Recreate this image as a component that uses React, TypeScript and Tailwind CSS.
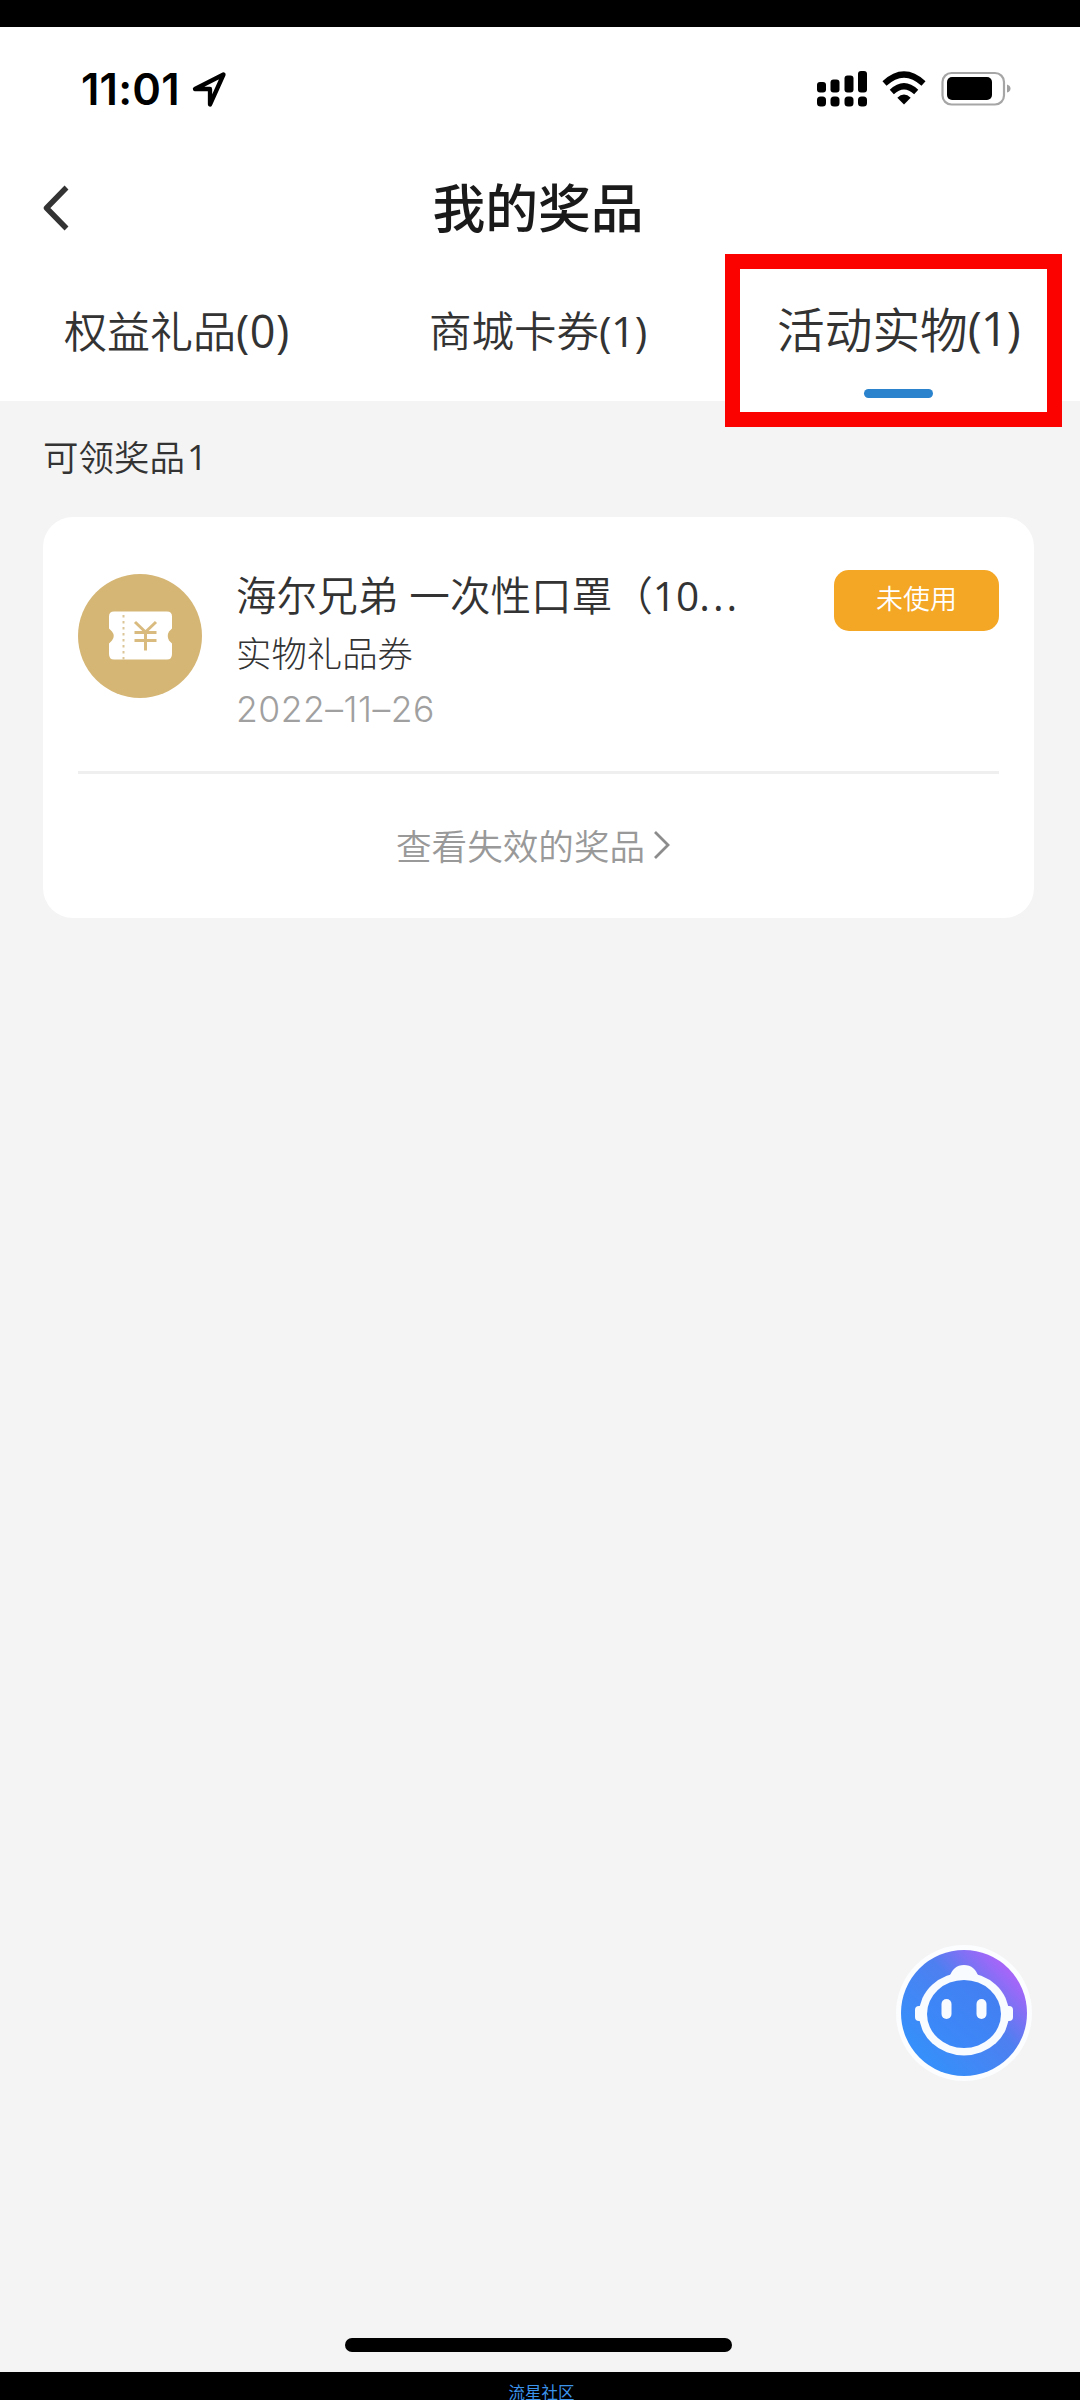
import React from "react";

const CJK = "font-['Noto_Sans_CJK_SC',sans-serif]";

function Num({ children, className = "" }: { children: React.ReactNode; className?: string }) {
  return <span className={`font-['Open_Sans',sans-serif] font-normal ${className}`}>{children}</span>;
}

function StatusBar() {
  return (
    <div className="flex h-[125px] items-start justify-between pl-[81px] pr-[69px] pt-[44px]">
      <div className="flex h-[36px] items-center text-black">
        <span className="w-[101px] whitespace-nowrap font-['Inter',sans-serif] text-[43.500px] font-semibold leading-[36px] tracking-[0.2px]">
          11:01
        </span>
        <svg className="ml-[9px] h-[38px] w-[38px]" viewBox="0 0 38 38" fill="none">
          <path d="M32.500 4.500 L4 19 H19 V34.500 Z" stroke="#000" strokeWidth="4.300" strokeLinejoin="round" />
        </svg>
      </div>
      <svg className="h-[36px] w-[194px]" viewBox="817 71 194 36">
        <g fill="#000">
          <rect x="817" y="82" width="9" height="10.500" rx="3" />
          <rect x="830.500" y="79.500" width="9" height="13" rx="3" />
          <rect x="844.500" y="75.500" width="9" height="17" rx="3" />
          <rect x="858" y="71" width="9" height="21.500" rx="3" />
          <rect x="817" y="96.500" width="9" height="10" rx="3.500" />
          <rect x="830.500" y="96.500" width="9" height="10" rx="3.500" />
          <rect x="844.500" y="96.500" width="9" height="10" rx="3.500" />
          <rect x="858" y="96.500" width="9" height="10" rx="3.500" />
          <path d="M904 104.500 L897.300 97.700 Q904 91.500 910.700 97.700 Z" />
          <rect x="947" y="77" width="45" height="23" rx="5" />
        </g>
        <path d="M884.500 83.500 Q904 65.500 923.500 83.500" fill="none" stroke="#000" strokeWidth="6" />
        <path d="M891.800 92 Q904 80.500 916.200 92" fill="none" stroke="#000" strokeWidth="6" />
        <rect x="942.500" y="73" width="61.500" height="31.500" rx="9" fill="none" stroke="#a6a6a6" strokeWidth="2.200" />
        <path d="M1007 84.500 Q1010.500 85.500 1010.500 88.500 Q1010.500 91.500 1007 92.500 Z" fill="#a0a0a0" />
      </svg>
    </div>
  );
}

function TitleBar() {
  return (
    <div className="grid h-[156px] grid-cols-[1fr_auto_1fr] items-start pl-[39px] pr-[43px]">
      <svg className="mt-[29px] h-[52px] w-[32px]" viewBox="0 0 32 52" fill="none">
        <path d="M27.500 6.500 L7.500 27 L27.500 47.500" stroke="#333" strokeWidth="5.500" strokeLinecap="butt" strokeLinejoin="round" />
      </svg>
      <h1 className="mt-[27px] text-[52.800px] font-medium leading-[52px] text-[#1a1a1a]">
        我的奖品
      </h1>
      <span />
    </div>
  );
}

function Tabs() {
  return (
    <div className="flex h-[93px] items-start font-[350] text-[#333]">
      <div className="w-[366px] whitespace-nowrap pl-[64px] text-[43px] leading-[42px]">
        权益礼品<Num className="text-[45px] tracking-[0.5px]">(0)</Num>
      </div>
      <div className="w-[359px] whitespace-nowrap pl-[63px] text-[42.500px] leading-[42px]">
        商城卡券<Num className="tracking-[-0.5px]">(1)</Num>
      </div>
      <div className="relative w-[337px] self-start">
        <div className="absolute left-0 top-[-54px] flex h-[173px] w-[337px] flex-col items-center border-[15.500px] border-[#fb0200] bg-white pt-[35px]">
          <div className="flex h-[48px] w-full items-center whitespace-nowrap pl-[37px] text-[47.700px]">
            活动实物<Num className="tracking-[-1.2px]">(1)</Num>
          </div>
          <div className="ml-[10px] mt-[37px] h-[9px] w-[69px] rounded-full bg-[#2b83cd]" />
        </div>
      </div>
    </div>
  );
}

function CouponIcon() {
  return (
    <svg className="mt-[57px] h-[125px] w-[125px] shrink-0" viewBox="0 0 125 125">
      <circle cx="62" cy="62" r="62" fill="#d5b675" />
      <path
        d="M36 37.500 H89 Q94 37.500 94 42.500 V54.500 L91 57.500 Q88.500 62 91 66.500 L94 69.500 V80 Q94 85.500 89 85.500 H36 Q31 85.500 31 80 V69.500 L34 66.500 Q37.500 62 34 57.500 L31 54.500 V42.500 Q31 37.500 36 37.500 Z"
        fill="#fff"
      />
      <path d="M45.500 41 V86" stroke="#dcc698" strokeWidth="2" strokeDasharray="2.500 3.500" />
      <path d="M57 48 L67.500 58 L78 48 M67.500 58 V76.500 M56.500 58.500 H78.500 M56.500 66.500 H78.500" fill="none" stroke="#d9bb80" strokeWidth="3" />
    </svg>
  );
}

function PrizeCard() {
  return (
    <section className="ml-[43px] mr-[46px] h-[401px] rounded-[30px] bg-white px-[35px]">
      <div className="flex h-[254px] items-start">
        <CouponIcon />
        <div className="ml-[33px] mt-[54px] flex w-[560px] flex-col whitespace-nowrap">
          <div className="text-[40.600px] font-[350] leading-[46px] text-[#333] [word-spacing:2px]">
            海尔兄弟 一次性口罩（<Num>10</Num>
            <Num className="tracking-[3px]">...</Num>
          </div>
          <div className="mt-[14px] text-[35.400px] font-light leading-[38px] text-[#333]">实物礼品券</div>
          <div className="mt-[20px] font-['Inter',sans-serif] text-[35.500px] font-light leading-[38px] tracking-[0.500px] text-[#a0a0a0]">
            2022–11–26
          </div>
        </div>
        <button className="ml-auto mt-[53px] h-[61px] w-[165px] rounded-[15px] bg-[#f4a625] pb-[6px] text-[27px] font-[350] leading-[54px] text-white">
          未使用
        </button>
      </div>
      <div className="h-[3px] bg-[#efefef]" />
      <button className="mt-[53px] flex h-[36px] w-full items-center pl-[318px] text-[35.600px] font-[350] leading-[36px] text-[#999]">
        <span className="whitespace-nowrap">查看失效的奖品</span>
        <svg className="ml-[5px] h-[34px] w-[22px]" viewBox="0 0 22 34" fill="none">
          <path d="M5 4 L18 17 L5 30" stroke="#8c8c8c" strokeWidth="2.800" />
        </svg>
      </button>
    </section>
  );
}

function Assistant() {
  return (
    <svg className="absolute right-[46px] top-[1942px] h-[140px] w-[140px]" viewBox="894 1942 140 140">
      <defs>
        <linearGradient id="bot" x1="0.2" y1="0.85" x2="0.88" y2="0.2">
          <stop offset="0" stopColor="#368ffa" />
          <stop offset="0.6" stopColor="#4e7ff0" />
          <stop offset="1" stopColor="#a566f8" />
        </linearGradient>
        <linearGradient id="face" x1="0" y1="1" x2="1" y2="0">
          <stop offset="0" stopColor="#398bfb" />
          <stop offset="1" stopColor="#457df0" />
        </linearGradient>
      </defs>
      <circle cx="964" cy="2013" r="68" fill="#fbfdff" />
      <circle cx="964" cy="2013" r="63" fill="url(#bot)" />
      <g fill="#f8fbff">
        <path d="M949 1978 Q953 1965 964 1965 Q975 1965 979 1978 Z" />
        <rect x="915" y="2006" width="12" height="15" rx="4" />
        <rect x="1001" y="2006" width="12" height="15" rx="4" />
        <ellipse cx="964" cy="2014" rx="45" ry="41.500" />
      </g>
      <ellipse cx="964" cy="2014" rx="37" ry="34" fill="url(#face)" />
      <rect x="941.500" y="1999" width="10" height="20" rx="5" fill="#f8fbff" />
      <rect x="976.500" y="1999" width="10" height="20" rx="5" fill="#f8fbff" />
    </svg>
  );
}

export default function App() {
  return (
    <div className={`relative flex h-[2400px] w-[1080px] flex-col overflow-hidden bg-[#f4f4f4] ${CJK}`}>
      <div className="h-[27px] shrink-0 bg-black" />
      <header className="h-[374px] shrink-0 bg-white">
        <StatusBar />
        <TitleBar />
        <Tabs />
      </header>
      <main className="flex-1">
        <div className="flex h-[116px] items-start pl-[43px] pt-[37px] text-[35.500px] font-[350] leading-[36px] text-[#333]">
          可领奖品<Num className="ml-[2px]">1</Num>
        </div>
        <PrizeCard />
      </main>
      <div className="mb-[20px] ml-[345px] h-[14px] w-[387px] shrink-0 rounded-full bg-black" />
      <footer className="flex h-[28px] shrink-0 justify-center bg-black pt-[12px] text-[16.500px] leading-[16px] text-[#3b93ea]">
        <span className="pl-[3px]">流星社区</span>
      </footer>
      <Assistant />
    </div>
  );
}
